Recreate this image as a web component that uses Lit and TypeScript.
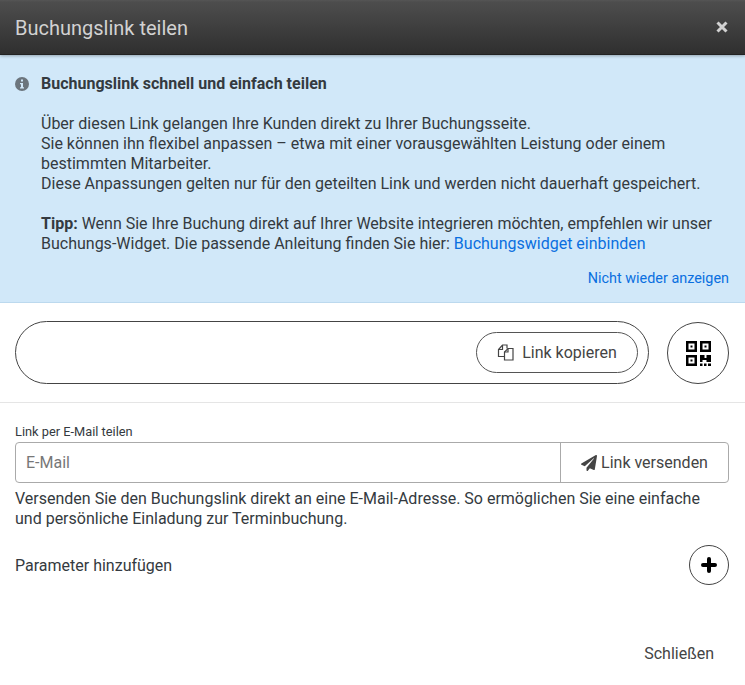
import { LitElement, html, css } from "lit";
import { customElement } from "lit/decorators.js";

@customElement("app-root")
export class AppRoot extends LitElement {
  static styles = css`
    :host { display: flex; flex-direction: column; width: 745px; height: 685px; overflow: hidden; background: #fff; font-family: Roboto, "Liberation Sans", sans-serif; font-size: 16px; line-height: 20px; color: #343a40; }
    * { box-sizing: border-box; }
    .head { height: 55px; flex: none; display: flex; align-items: center; justify-content: space-between; padding: 1px 16px 0 15px; background: linear-gradient(#555 0, #4d4d4d 4%, #2f2f2f 100%); border-bottom: 1px solid #222; box-shadow: 0 1px 3px rgba(0,0,0,.3); position: relative; }
    .title { font-size: 20px; color: #d2d2d2; }
    .close { width: 14px; height: 14px; display: block; margin-top: -2px; }
    .info { height: 248px; flex: none; background: #d1e8f9; border-bottom: 1px solid #bcd9ee; padding: 19px 16px 0 15px; display: grid; grid-template-columns: 26px 1fr; align-content: start; }
    .iicon { width: 14px; height: 14px; margin-top: 3px; }
    .msg p { margin: 0 0 20px; }
    .msg p:last-child { margin-bottom: 0; }
    .more { grid-column: 1 / 3; text-align: right; font-size: 14.4px; margin-top: 15px; }
    a { color: #0a6fe0; text-decoration: none; }
    .linkrow { height: 100px; flex: none; border-bottom: 1px solid #e5e5e5; display: flex; align-items: flex-start; padding: 18px 16px 0 15px; gap: 18px; }
    .linkbox { width: 634px; height: 63px; border: 1px solid #444; border-radius: 32px; display: flex; align-items: center; justify-content: flex-end; padding-right: 10px; }
    .copy { width: 162px; height: 41px; border: 1px solid #555; border-radius: 21px; display: flex; align-items: center; justify-content: center; gap: 8px; color: #444; }
    .qr { width: 62px; height: 62px; margin-top: 1px; border: 1px solid #444; border-radius: 50%; display: flex; align-items: center; justify-content: center; }
    .mail { padding: 20px 16px 0 15px; flex: none; }
    .lbl { font-size: 12.8px; line-height: 17px; }
    .group { display: flex; height: 41px; margin-top: 2px; border: 1px solid #aaa; border-radius: 4px; }
    .input { flex: 1; padding-left: 10px; display: flex; align-items: center; color: #777; }
    .send { width: 168px; border-left: 1px solid #aaa; display: flex; align-items: center; justify-content: center; gap: 4px; color: #444; }
    .desc { margin-top: 6px; }
    .param { flex: none; margin-top: 17px; padding: 0 16px 0 15px; display: flex; align-items: center; justify-content: space-between; }
    .plus { width: 40px; height: 40px; margin-top: -1px; border: 1px solid #444; border-radius: 50%; display: flex; align-items: center; justify-content: center; }
    .foot { flex: 1; display: flex; justify-content: flex-end; align-items: flex-start; padding: 59px 31px 0 0; color: #444; }
  `;

  render() {
    return html`
      <div class="head">
        <span class="title">Buchungslink teilen</span>
        <svg class="close" viewBox="0 0 14 14"><path d="M2.5 2.5l9 9M11.5 2.5l-9 9" stroke="#d2d2d2" stroke-width="3"/></svg>
      </div>
      <div class="info">
        <svg class="iicon" viewBox="0 0 14 14"><circle cx="7" cy="7" r="7" fill="#6c757d"/><rect x="6" y="2.5" width="2" height="2" fill="#d1e8f9"/><path d="M5 6h3v4.2h1v1.3H5v-1.3h1V7.3H5z" fill="#d1e8f9"/></svg>
        <div class="msg">
          <p><b>Buchungslink schnell und einfach teilen</b></p>
          <p>Über diesen Link gelangen Ihre Kunden direkt zu Ihrer Buchungsseite.<br>Sie können ihn flexibel anpassen – etwa mit einer vorausgewählten Leistung oder einem bestimmten Mitarbeiter.<br>Diese Anpassungen gelten nur für den geteilten Link und werden nicht dauerhaft gespeichert.</p>
          <p><b>Tipp:</b> Wenn Sie Ihre Buchung direkt auf Ihrer Website integrieren möchten, empfehlen wir unser Buchungs-Widget. Die passende Anleitung finden Sie hier: <a href="#">Buchungswidget einbinden</a></p>
        </div>
        <div class="more"><a href="#">Nicht wieder anzeigen</a></div>
      </div>
      <div class="linkrow">
        <div class="linkbox">
          <div class="copy">
            <svg width="17" height="17" viewBox="0 0 17 17" fill="none" stroke="#444" stroke-width="1.2"><path d="M7 12.5H1.5V5.5L5.5 1H10V4.5"/><path d="M5.5 1v4.5H1.5"/><path d="M7.5 16V8L11 4.5H16V16z" fill="#fff"/><path d="M11 4.5V8H7.5"/></svg>
            <span>Link kopieren</span>
          </div>
        </div>
        <div class="qr">
          <svg width="25" height="25" viewBox="0 0 25 25" fill="#000"><path fill-rule="evenodd" d="M0 0h11v11H0zM2.5 2.5v6h6v-6zM14 0h11v11H14zM16.5 2.5v6h6v-6zM0 14h11v11H0zM2.5 16.5v6h6v-6z"/><rect x="4.5" y="4.5" width="2" height="2"/><rect x="18.5" y="4.5" width="2" height="2"/><rect x="4.5" y="18.5" width="2" height="2"/><path d="M14 14h4.5v3h2v-3H25v7h-4.5v-2h-4v2H14z"/><rect x="14" y="22.5" width="2.5" height="2.5"/><rect x="18" y="22.5" width="2.5" height="2.5"/><rect x="22" y="22.5" width="3" height="2.5"/></svg>
        </div>
      </div>
      <div class="mail">
        <div class="lbl">Link per E-Mail teilen</div>
        <div class="group">
          <div class="input">E-Mail</div>
          <div class="send">
            <svg width="16" height="16" viewBox="0 0 512 512"><path fill="#444" d="M476 3L12 271c-18 10-16 35 2 43l106 44 288-254c6-5 14 3 9 9L176 406v82c0 24 29 33 43 16l64-78 125 52c14 6 31-3 33-18L512 28c3-20-18-35-36-25z"/></svg>
            <span>Link versenden</span>
          </div>
        </div>
        <div class="desc">Versenden Sie den Buchungslink direkt an eine E-Mail-Adresse. So ermöglichen Sie eine einfache und persönliche Einladung zur Terminbuchung.</div>
      </div>
      <div class="param">
        <span>Parameter hinzufügen</span>
        <div class="plus"><svg width="16" height="16" viewBox="0 0 16 16"><path d="M8 2v12M2 8h12" stroke="#000" stroke-width="4" stroke-linecap="round"/></svg></div>
      </div>
      <div class="foot">Schließen</div>
    `;
  }
}
